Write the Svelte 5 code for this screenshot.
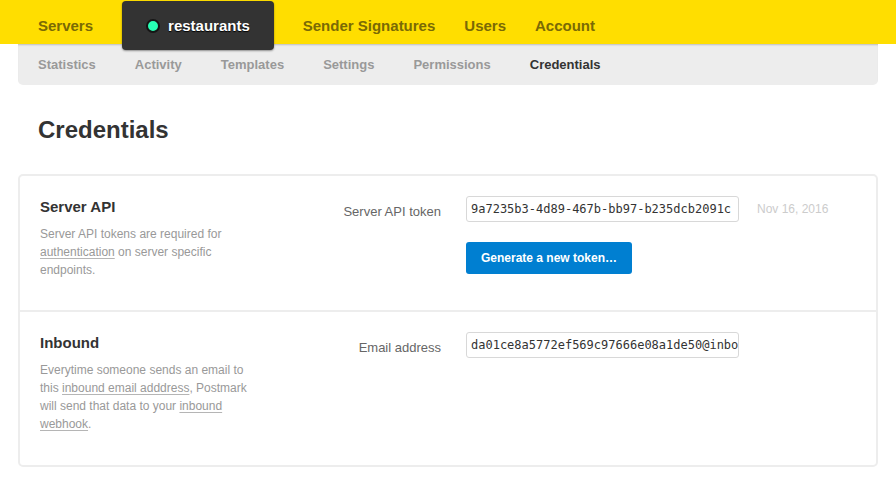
<script>
  const mainNav = [
    { label: 'Servers' },
    { label: 'restaurants', current: true },
    { label: 'Sender Signatures' },
    { label: 'Users' },
    { label: 'Account' }
  ];
  const serverNav = ['Statistics', 'Activity', 'Templates', 'Settings', 'Permissions', 'Credentials'];
  let token = $state('9a7235b3-4d89-467b-bb97-b235dcb2091c');
  let email = $state('da01ce8a5772ef569c97666e08a1de50@inbo');
</script>

<header>
  <nav class="main-nav" aria-label="Main">
    {#each mainNav as item}
      <a href="#main" class:server={item.current}>
        {#if item.current}<span class="dot"></span>{/if}{item.label}
      </a>
    {/each}
  </nav>
</header>

<nav class="sub-nav" aria-label="Server">
  {#each serverNav as label}
    <a href="#server" class:active={label === 'Credentials'}>{label}</a>
  {/each}
</nav>

<main>
  <h1>Credentials</h1>
  <div class="panel">
    <section>
      <div class="about">
        <h2>Server API</h2>
        <p>Server API tokens are required for <a href="#authentication">authentication</a> on server specific endpoints.</p>
      </div>
      <label for="token">Server API token</label>
      <div class="field">
        <div class="row">
          <input id="token" type="text" readonly bind:value={token} />
          <time datetime="2016-11-16">Nov 16, 2016</time>
        </div>
        <button type="button">Generate a new token…</button>
      </div>
    </section>
    <section>
      <div class="about">
        <h2>Inbound</h2>
        <p>Everytime someone sends an email to this <a href="#address">inbound email adddress</a>, Postmark will send that data to your <a href="#webhook">inbound webhook</a>.</p>
      </div>
      <label for="email">Email address</label>
      <div class="field">
        <div class="row">
          <input id="email" type="text" readonly bind:value={email} />
        </div>
      </div>
    </section>
  </div>
</main>

<style>
  :global(body) {
    margin: 0;
    background: #fff;
    color: #333;
    font-family: "Liberation Sans", Arial, sans-serif;
  }
  header {
    position: relative;
    z-index: 1;
    height: 44px;
    padding: 0 38px;
    background: #ffde00;
  }
  .main-nav {
    display: flex;
    align-items: flex-start;
    gap: 29px;
    padding-top: 1px;
  }
  .main-nav a {
    color: #7a6a05;
    font-size: 15px;
    font-weight: bold;
    line-height: 49px;
    white-space: nowrap;
    text-decoration: none;
  }
  .main-nav .server {
    display: flex;
    align-items: center;
    gap: 8px;
    padding: 0 24px;
    border-radius: 4px;
    background: #333;
    color: #fff;
    text-shadow: 0 1px 1px #000;
    box-shadow: 0 1px 2px rgba(0, 0, 0, 0.4);
  }
  .dot {
    box-sizing: border-box;
    width: 14px;
    height: 14px;
    border: 2px solid #151515;
    border-radius: 50%;
    background: #27ffb4;
  }
  .sub-nav {
    display: flex;
    gap: 39px;
    margin: 0 18px;
    padding: 0 20px;
    border-radius: 0 0 5px 5px;
    background: #ededed;
    box-shadow: inset 0 2px 2px -1px rgba(0, 0, 0, 0.2);
  }
  .sub-nav a {
    color: #999;
    font-size: 13px;
    font-weight: bold;
    line-height: 41px;
    text-decoration: none;
  }
  .sub-nav .active {
    color: #333;
  }
  main {
    padding: 0 18px 12px;
  }
  h1 {
    margin: 0;
    padding: 30px 20px 29px;
    font-size: 24px;
    line-height: 30px;
  }
  .panel {
    padding-bottom: 1px;
    border: 2px solid #ededed;
    border-radius: 5px;
  }
  section {
    display: flex;
    align-items: flex-start;
    padding: 20px 20px 31px;
  }
  section + section {
    border-top: 2px solid #ededed;
  }
  .about {
    flex: none;
    width: 210px;
  }
  h2 {
    margin: 0 0 7px;
    font-size: 15px;
    line-height: 22px;
  }
  p {
    margin: 0;
    color: #999;
    font-size: 12px;
    line-height: 18px;
  }
  p a {
    color: inherit;
    text-decoration: underline;
    text-decoration-color: #b5b5b5;
    text-decoration-thickness: 1px;
    text-decoration-skip-ink: none;
    text-underline-offset: 2px;
  }
  label {
    flex: 1;
    color: #666;
    font-size: 13px;
    line-height: 32px;
    text-align: right;
  }
  .field {
    flex: none;
    width: 390px;
    margin-left: 25px;
  }
  .row {
    display: flex;
    align-items: center;
    gap: 18px;
  }
  input {
    box-sizing: border-box;
    width: 273px;
    height: 26px;
    padding: 0 0 0 4px;
    border: 1px solid #d8d8d8;
    border-radius: 3px;
    background: #fff;
    color: #333;
    font-family: "DejaVu Sans Mono", monospace;
    font-size: 12px;
  }
  time {
    color: #ccc;
    font-size: 12px;
    white-space: nowrap;
  }
  button {
    display: block;
    height: 32px;
    margin: 20px 0 0;
    padding: 0 15px;
    border: 0;
    border-radius: 3px;
    background: #007fd1;
    color: #fff;
    font-family: inherit;
    font-size: 12px;
    font-weight: bold;
  }
</style>
